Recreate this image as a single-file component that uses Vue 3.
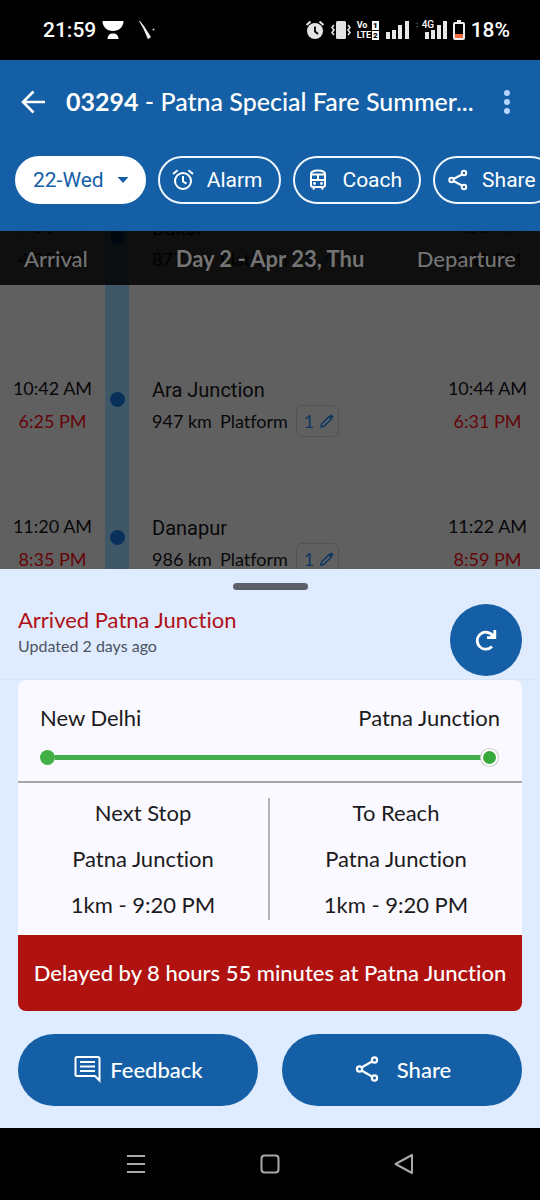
<script setup>
const stops = [
  { name: 'Buxar', km: '877 km', platform: '1', arr: '9:53 AM', arrNow: '4:35 PM', dep: '9:55 AM', depNow: '4:41 PM', tall: true },
  { name: 'Ara Junction', km: '947 km', platform: '1', arr: '10:42 AM', arrNow: '6:25 PM', dep: '10:44 AM', depNow: '6:31 PM' },
  { name: 'Danapur', km: '986 km', platform: '1', arr: '11:20 AM', arrNow: '8:35 PM', dep: '11:22 AM', depNow: '8:59 PM' },
]
const summary = [
  { label: 'Next Stop', station: 'Patna Junction', detail: '1km - 9:20 PM' },
  { label: 'To Reach', station: 'Patna Junction', detail: '1km - 9:20 PM' },
]
</script>

<template>
  <div class="screen">
    <div class="status">
      <div class="status-left">
        <span>21:59</span>
        <svg class="bowl" width="22" height="20" viewBox="0 0 22 20" fill="#fff"><path d="M0.500 1h21c0 6-4.500 10-10.500 10S0.500 7 0.500 1z" /><path d="M5.500 19c0-3.500 2-5.500 5.500-5.500s5.500 2 5.500 5.500z" /></svg>
        <svg class="stick" width="18" height="20" viewBox="0 0 18 20"><path d="M1 1l1 0 4 5 7 11-3 2.200L5 8z" fill="#eee" /><circle cx="15.500" cy="9.500" r="1" fill="#ccc" /></svg>
      </div>
      <div class="status-right">
        <svg width="20" height="20" viewBox="0 0 20 20"><circle cx="10" cy="11" r="8" fill="#e4e4e4" /><path d="M1.500 5L5.500 1.500M18.500 5l-4-3.500" stroke="#e4e4e4" stroke-width="2" /><path d="M10 6.500v5l3 2.500" stroke="#000" stroke-width="1.800" fill="none" /></svg>
        <svg width="20" height="20" viewBox="0 0 20 20"><rect x="5" y="1" width="10" height="18" rx="1.500" fill="#e4e4e4" /><path d="M3 5L1 7.500l2 2.500-2 2.500L3 15M17 5l2 2.500-2 2.500 2 2.500-2 2.500" fill="none" stroke="#e4e4e4" stroke-width="1.600" /></svg>
        <span class="volte"><span>Vo<b>1</b></span><span>LTE<b>2</b></span></span>
        <svg width="24" height="20" viewBox="0 0 24 20" fill="#e8e8e8"><path d="M1 12h4v7H1zM7 10h4v9H7zM13 5h4v14h-4zM20 1h4v18h-4z" /></svg>
        <span class="cell">
          <svg width="32" height="20" viewBox="0 0 32 20"><path d="M0 4l2-2 2 2zM0 6l2 2 2-2z" fill="#333" /><path d="M10 12h4v7h-4zM16 10h4v9h-4zM22 5h4v14h-4zM28 1h4v18h-4z" fill="#e8e8e8" /></svg>
          <span class="cell-tag">4G</span>
        </span>
        <svg width="12" height="20" viewBox="0 0 12 20"><path d="M4 0h4v3H4z" fill="#eee" /><rect x="1" y="3" width="10" height="16" rx="1" fill="none" stroke="#eee" stroke-width="2" /><path d="M2 14h8v4H2z" fill="#f2683c" /></svg>
        <span>18%</span>
      </div>
    </div>

    <header class="header">
      <div class="title-row">
        <button class="icon-btn" aria-label="Back">
          <svg width="26" height="26" viewBox="0 0 26 26" fill="none" stroke="#fff" stroke-width="2.600"><path d="M25 13H3M13.500 2.500L3 13l10.500 10.500" /></svg>
        </button>
        <h1><b>03294</b> - Patna Special Fare Summer...</h1>
        <button class="icon-btn more" aria-label="More">
          <svg width="6" height="26" viewBox="0 0 6 26" fill="#b5d6ff"><circle cx="3" cy="4" r="3" /><circle cx="3" cy="13" r="3" /><circle cx="3" cy="22" r="3" /></svg>
        </button>
      </div>
      <div class="chips">
        <button class="chip date">22-Wed
          <svg width="12" height="6" viewBox="0 0 12 6" fill="#145fa5"><path d="M0.500 0h11L6 6z" /></svg>
        </button>
        <button class="chip">
          <svg width="24" height="24" viewBox="0 0 24 24" fill="none" stroke="#fff" stroke-width="2"><circle cx="12" cy="13" r="8" /><path d="M12 8v5.500l3.500 2.200M2 6l4.600-3.800M22 6l-4.600-3.800" /></svg>
          Alarm
        </button>
        <button class="chip">
          <svg width="24" height="24" viewBox="0 0 24 24" fill="none" stroke="#fff" stroke-width="2"><path d="M5 17V6c0-3 3-3.500 7-3.500s7 .5 7 3.500v11c0 1-1 2-2 2H7c-1 0-2-1-2-2zM5 6.500h14M5 12h14M12 6.500V12M9 19l-2 2.500M15 19l2 2.500" /><circle cx="8.500" cy="15.500" r="1.400" fill="#fff" stroke="none" /><circle cx="15.500" cy="15.500" r="1.400" fill="#fff" stroke="none" /></svg>
          Coach
        </button>
        <button class="chip">
          <svg width="24" height="24" viewBox="0 0 24 24" fill="none" stroke="#fff" stroke-width="2"><path d="M7.500 11l8.500-4.500M7.500 13l8.500 4.500" /><circle cx="5.500" cy="12" r="2.200" /><circle cx="18" cy="5" r="2.200" /><circle cx="18" cy="19" r="2.200" /></svg>
          Share
        </button>
      </div>
    </header>

    <main class="timeline">
      <div class="day-bar">
        <span>Arrival</span><b>Day 2 - Apr 23, Thu</b><span>Departure</span>
      </div>
      <div class="stops">
        <div v-for="s in stops" :key="s.name" class="stop" :class="{ tall: s.tall }">
          <div class="times"><span>{{ s.arr }}</span><span class="late">{{ s.arrNow }}</span></div>
          <div class="rail"><i></i></div>
          <div class="info">
            <span class="name">{{ s.name }}</span>
            <span class="meta"><span>{{ s.km }}</span><span>Platform</span>
              <button class="platform">{{ s.platform }}
                <svg width="14" height="14" viewBox="0 0 14 14" fill="none" stroke="#0d3761" stroke-width="1.500"><path d="M1 13l.6-3L9 2.600 11.400 5 4 12.400z" /><path d="M10.400 1.200l2.400 2.400" stroke-width="2.400" /></svg>
              </button>
            </span>
          </div>
          <div class="times"><span>{{ s.dep }}</span><span class="late">{{ s.depNow }}</span></div>
        </div>
      </div>
    </main>

    <section class="sheet">
      <div class="handle"></div>
      <div class="sheet-head">
        <div>
          <h2>Arrived Patna Junction</h2>
          <p>Updated 2 days ago</p>
        </div>
        <button class="refresh" aria-label="Refresh">
          <svg width="24" height="24" viewBox="0 0 24 24" fill="none" stroke="#fff" stroke-width="2.800"><path d="M18.500 7.500A8.500 8.500 0 1 0 18 18.500" /><path d="M20.800 2v7.600H13" /><path d="M20.500 4v5.500H15z" fill="#fff" stroke="none" /></svg>
        </button>
      </div>
      <div class="sheet-body">
        <div class="card">
          <div class="route">
            <div class="ends"><span>New Delhi</span><span>Patna Junction</span></div>
            <div class="track"><i class="start"></i><i class="line"></i><i class="end"></i></div>
          </div>
          <div class="summary">
            <div v-for="c in summary" :key="c.label" class="cell-info">
              <span>{{ c.label }}</span><span>{{ c.station }}</span><span>{{ c.detail }}</span>
            </div>
          </div>
          <div class="delay">Delayed by 8 hours 55 minutes at Patna Junction</div>
        </div>
      </div>
      <div class="actions">
        <button>
          <svg width="28" height="28" viewBox="0 0 28 28" fill="none" stroke="#fff" stroke-width="2"><path d="M26.500 25.500V3.500a1.500 1.500 0 0 0-1.500-1.500H4a1.500 1.500 0 0 0-1.500 1.500v16A1.500 1.500 0 0 0 4 21h18zM7 7h15M7 11.500h15M7 16h15" /></svg>
          Feedback
        </button>
        <button class="share">
          <svg width="28" height="28" viewBox="0 0 28 28" fill="none" stroke="#fff" stroke-width="2.200"><path d="M8.500 12.500l10.500-6M8.500 15.500l10.500 6" /><circle cx="6.500" cy="14" r="2.600" /><circle cx="21.500" cy="5" r="2.600" /><circle cx="21.500" cy="23" r="2.600" /></svg>
          Share
        </button>
      </div>
    </section>

    <nav class="nav">
      <button aria-label="Recent apps"><svg width="20" height="20" viewBox="0 0 20 20" stroke="#aaa" stroke-width="2"><path d="M1 2h18M1 10h18M1 18h18" /></svg></button>
      <button aria-label="Home"><svg width="20" height="20" viewBox="0 0 20 20" fill="none" stroke="#aaa" stroke-width="2"><rect x="1.500" y="1.500" width="17" height="17" rx="3" /></svg></button>
      <button aria-label="Back"><svg width="20" height="20" viewBox="0 0 20 20" fill="none" stroke="#aaa" stroke-width="2" stroke-linejoin="round"><path d="M18 1v18L1.500 10z" /></svg></button>
    </nav>
  </div>
</template>

<style>
body { background: #000; }
</style>

<style scoped>
* { box-sizing: border-box; margin: 0; }
button { font: inherit; color: inherit; background: none; border: 0; padding: 0; cursor: pointer; }
svg { display: block; flex: none; }
.screen, button { font-variant-ligatures: none; }
.screen { min-height: 100vh; display: flex; flex-direction: column; font-family: Lato, "Noto Sans", sans-serif; color: #1b1b20; overflow: hidden; }

.status { height: 60px; padding: 0 30px 0 43px; display: flex; align-items: center; justify-content: space-between; background: #000; color: #fff; font: 500 21px/24px Roboto, sans-serif; }
.status-left, .status-right { display: flex; align-items: center; }
.status-left { gap: 6px; }
.stick { margin-left: 8px; }
.status-right { gap: 6px; }
.volte { width: 22px; display: flex; flex-direction: column; font: 700 9px/10px Roboto, sans-serif; }
.volte > span { display: flex; justify-content: space-between; align-items: center; }
.volte b { background: #fff; color: #000; padding: 0 1px; line-height: 9px; font-size: 8px; }
.cell { position: relative; }
.cell-tag { position: absolute; left: 7px; top: 0; font: 500 10px/9px Roboto, sans-serif; background: #000; }

.header { background: #145fa5; color: #fff; padding: 18px 0 27px; }
.title-row { height: 48px; display: flex; align-items: center; padding: 0 30px 0 20px; }
.icon-btn { display: flex; }
h1 { flex: 1; min-width: 0; margin-left: 20px; padding-bottom: 2px; font-size: 25px; line-height: 32px; font-weight: 500; white-space: nowrap; }
.chips { display: flex; gap: 12px; padding: 30px 0 0 15px; overflow: hidden; }
.chip { flex: none; height: 48px; display: flex; align-items: center; gap: 12px; padding: 0 17px 0 11px; border: 2px solid #f0f7ff; border-radius: 24px; font: 400 21px/24px Roboto, sans-serif; }
.chip.date { background: #fff; border-color: #fff; color: #145fa5; padding: 0 15px 0 16px; gap: 13px; }

.timeline { position: relative; flex: 1 1 0; min-height: 240px; overflow: hidden; background: #606060; color: #08080a; }
.day-bar { position: absolute; inset: 0 0 auto; z-index: 1; height: 54px; display: grid; grid-template-columns: 1fr auto 1fr; align-items: center; padding: 0 24px; background: rgba(0, 0, 0, .84); color: #747474; font-size: 22px; font-weight: 500; white-space: nowrap; }
.day-bar span:last-child { text-align: right; }
.stops { margin-top: -21px; }
.stop { display: grid; grid-template-columns: 105px 24px 1fr 105px; height: 138px; font-size: 18px; }
.stop.tall { height: 162px; }
.stop:last-child { height: 162px; }
.times { display: flex; flex-direction: column; align-items: center; line-height: 33px; }
.late { color: #640507; }
.tall .late { color: #1a0a0a; }
.rail { background: #3e5868; display: flex; justify-content: center; padding-top: 20px; }
.rail i { width: 15px; height: 15px; border-radius: 50%; background: #09305a; }
.info { display: flex; flex-direction: column; padding: 2px 0 0 23px; white-space: nowrap; }
.name { font: 400 20px/32px Roboto, sans-serif; }
.meta { display: flex; align-items: center; gap: 8px; height: 30px; }
.platform { height: 32px; padding: 0 4px 0 7px; display: flex; align-items: center; gap: 6px; border: 1px solid #535353; border-radius: 6px; color: #0d3761; }

.sheet { background: #dfebfe; padding: 14px 0 22px; }
.handle { width: 75px; height: 7px; border-radius: 4px; background: #5c6068; margin: 0 auto; }
.sheet-head { display: flex; justify-content: space-between; align-items: flex-start; padding: 14px 18px 3px; }
h2 { font-size: 22px; line-height: 32px; font-weight: 400; color: #b01116; }
.sheet-head p { font-size: 16px; line-height: 20px; color: #4c535e; }
.refresh { width: 72px; height: 72px; border-radius: 50%; background: #145fa5; display: flex; align-items: center; justify-content: center; }
.sheet-body { border-top: 1px solid #d9e4f7; padding: 0 18px; }
.card { background: #faf9ff; border-radius: 8px; overflow: hidden; font-size: 22px; line-height: 30px; }
.route { padding: 23px 22px 15px; border-bottom: 2px solid #a7a7aa; }
.ends { display: flex; justify-content: space-between; }
.track { display: flex; align-items: center; height: 18px; margin-top: 15px; padding-right: 2px; }
.start { width: 15px; height: 15px; border-radius: 50%; background: #41b045; }
.line { flex: 1; height: 5px; background: #45ad49; }
.end { width: 17px; height: 17px; border-radius: 50%; background: #36ab3b; border: 2px solid #fff; box-shadow: 0 0 0 1px #c6cbc6; }
.summary { display: grid; grid-template-columns: 1fr 1fr; padding: 15px 0; }
.cell-info { display: flex; flex-direction: column; align-items: center; gap: 16px; height: 122px; }
.cell-info:first-child { border-right: 2px solid #b4b4b8; }
.delay { background: #b01210; color: #fff; min-height: 76px; padding: 0 8px; display: flex; align-items: center; justify-content: center; text-align: center; font-weight: 500; }
.actions { display: flex; gap: 24px; padding: 23px 18px 0; }
.actions button { flex: 1; height: 72px; padding-bottom: 2px; border-radius: 36px; background: #145fa5; color: #fff; display: flex; align-items: center; justify-content: center; gap: 9px; font-size: 22px; font-weight: 500; }
.actions .share { gap: 16px; }

.nav { height: 72px; background: #000; display: flex; justify-content: center; align-items: center; gap: 114px; }
.nav button { display: flex; }
</style>
